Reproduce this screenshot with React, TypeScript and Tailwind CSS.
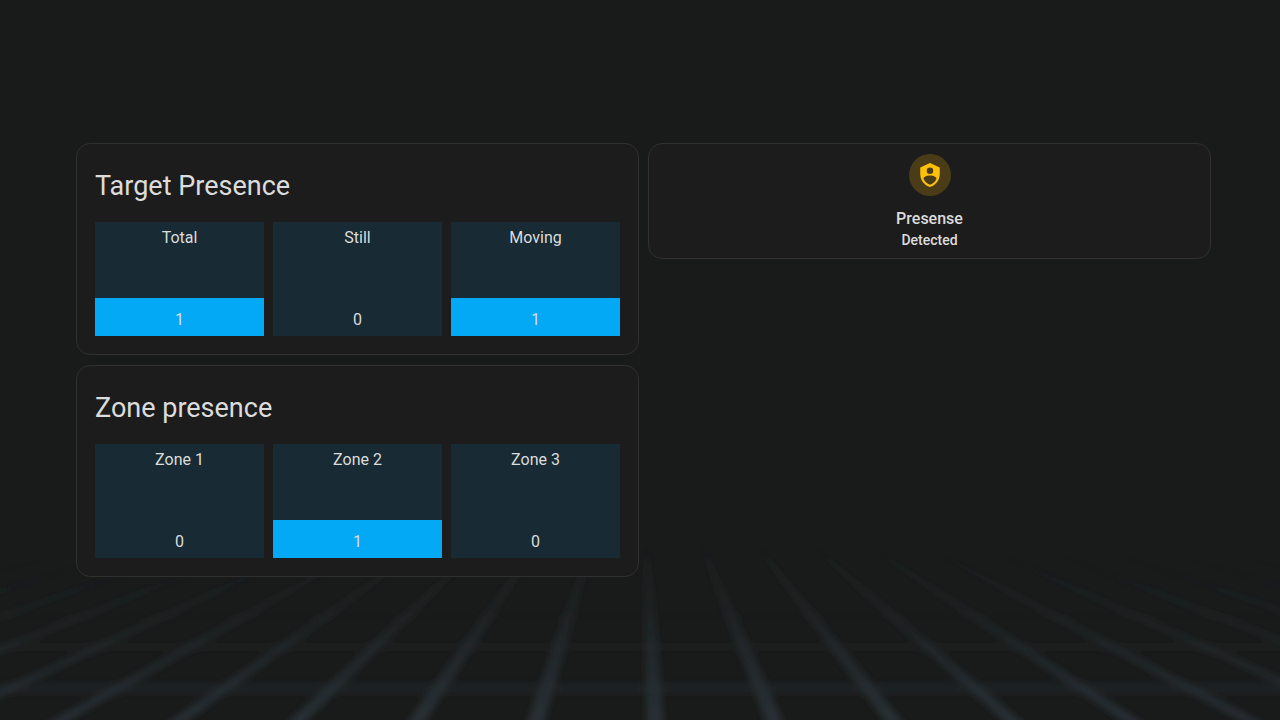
interface Reading {
  label: string;
  value: number;
}

interface PresenceCardProps {
  title: string;
  readings: Reading[];
}

const TARGETS: Reading[] = [
  { label: "Total", value: 1 },
  { label: "Still", value: 0 },
  { label: "Moving", value: 1 },
];

const ZONES: Reading[] = [
  { label: "Zone 1", value: 0 },
  { label: "Zone 2", value: 1 },
  { label: "Zone 3", value: 0 },
];

// every bar is scaled against a maximum of three targets
const MAX_TARGETS = 3;

const RAYS = Array.from({ length: 31 }, (_, i) => 656 + (i - 15) * 126);

function FloorGrid() {
  return (
    <svg
      aria-hidden="true"
      viewBox="0 0 1280 180"
      className="pointer-events-none absolute inset-x-0 bottom-0 w-full"
    >
      <defs>
        <linearGradient id="floor-fade" x1="0" y1="0" x2="0" y2="180" gradientUnits="userSpaceOnUse">
          <stop offset="0" stopColor="#283238" stopOpacity="0" />
          <stop offset="0.35" stopColor="#283238" stopOpacity="0.25" />
          <stop offset="1" stopColor="#283238" stopOpacity="0.9" />
        </linearGradient>
        <filter id="floor-blur" x="-5%" y="-20%" width="110%" height="140%">
          <feGaussianBlur stdDeviation="3" />
        </filter>
      </defs>
      <g filter="url(#floor-blur)" fill="url(#floor-fade)">
        {RAYS.map((x) => (
          <polygon key={x} points={`639,-147 ${x - 9},200 ${x + 9},200`} />
        ))}
        <rect x="-20" y="76" width="1320" height="2" opacity="0.4" />
        <rect x="-20" y="103" width="1320" height="8" opacity="0.3" />
        <rect x="-20" y="143" width="1320" height="11" opacity="0.4" />
      </g>
    </svg>
  );
}

function Bar({ label, value }: Reading) {
  return (
    <div className="relative flex h-[114px] flex-col justify-between bg-[#182a33] text-center text-base">
      <div
        className="absolute inset-x-0 bottom-0 bg-[#03a9f4]"
        style={{ height: `${(value / MAX_TARGETS) * 100}%` }}
      />
      <span className="relative pt-1">{label}</span>
      <span className="relative pb-1">{value}</span>
    </div>
  );
}

function PresenceCard({ title, readings }: PresenceCardProps) {
  return (
    <section className="rounded-[14px] border border-[#303030] bg-[#1c1c1c] px-[18px] pt-[22px] pb-[18px]">
      <h2 className="mb-4 text-[27px] leading-10">{title}</h2>
      <div className="grid grid-cols-3 gap-[9px]">
        {readings.map((reading) => (
          <Bar key={reading.label} {...reading} />
        ))}
      </div>
    </section>
  );
}

function StatusCard() {
  return (
    <section className="flex flex-col items-center rounded-[14px] border border-[#303030] bg-[#1c1c1c] px-[10px] pt-[10px] pb-2 font-medium">
      <div className="flex size-[42px] items-center justify-center rounded-full bg-[#493c17]">
        <svg viewBox="0 0 24 24" className="size-[26px] fill-[#ffc107]" aria-hidden="true">
          <path d="M12,1L3,5V11C3,16.55 6.84,21.74 12,23C17.16,21.74 21,16.55 21,11V5L12,1M12,5A3,3 0 0,1 15,8A3,3 0 0,1 12,11A3,3 0 0,1 9,8A3,3 0 0,1 12,5M17.13,17C15.92,18.85 14.11,20.24 12,20.92C9.87,20.24 8.06,18.85 6.87,17C6.53,16.5 6.24,16 6,15.47C6,13.82 8.71,12.47 12,12.47C15.29,12.47 18,13.79 18,15.47C17.76,16 17.47,16.5 17.13,17Z" />
        </svg>
      </div>
      <h2 className="mt-3 text-base leading-[22px]">Presense</h2>
      <p className="text-sm leading-5">Detected</p>
    </section>
  );
}

export default function App() {
  return (
    <main className="relative min-h-screen overflow-hidden bg-[#191b1a] pt-[143px] pr-[69px] pb-8 pl-[76px] font-[Roboto,sans-serif] text-[#dcdcdc]">
      <FloorGrid />
      <div className="relative grid grid-cols-2 items-start gap-[9px]">
        <div className="flex flex-col gap-[10px]">
          <PresenceCard title="Target Presence" readings={TARGETS} />
          <PresenceCard title="Zone presence" readings={ZONES} />
        </div>
        <StatusCard />
      </div>
    </main>
  );
}
